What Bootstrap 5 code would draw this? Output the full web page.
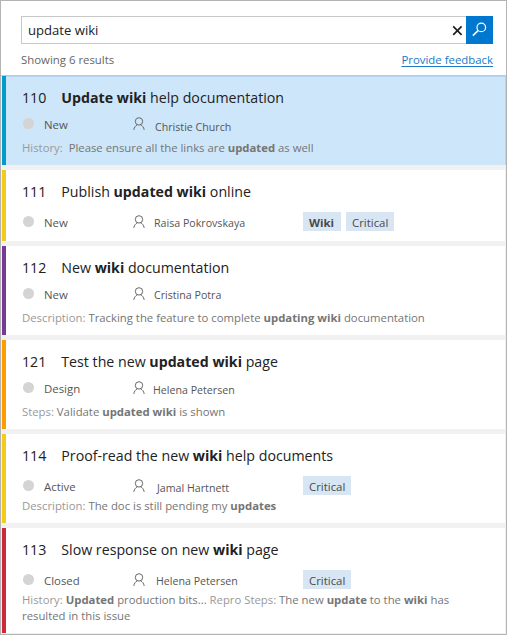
<!DOCTYPE html>
<html lang="en">
<head>
<meta charset="utf-8">
<meta name="viewport" content="width=device-width, initial-scale=1">
<title>Work item search</title>
<link href="https://cdn.jsdelivr.net/npm/bootstrap@5.3.0/dist/css/bootstrap.min.css" rel="stylesheet">
<style>
body{font-family:"Open Sans","Noto Sans",sans-serif;font-size:11.4px;color:#555;background:#fff;overflow:hidden}
.panel{height:635px;border:1px solid #b3b3b3}
.search-head{height:75px;padding:15px 13px 0 20px;border-bottom:1px solid #c4c8d0}
.search-box{height:28px;border:1px solid #c8c8c8;border-right:0;padding:0 3px 0 6px}
.query{font-size:13.1px;line-height:26px;color:#222}
.search-btn{width:27px;height:28px;background:#0078d0}
.result-info{margin-top:7px;height:17px;line-height:17px;color:#666}
.feedback{color:#1a7bc8;text-decoration:underline;text-underline-offset:2px}
.results{background:#f1f1f1;gap:5px;padding:0 1px}
.item{height:89px;padding:12px 20px 0 16px;border-left:4px solid;background:#fff}
.item-selected{background:#cde6f9;box-shadow:inset 0 1px #b5d3f2,1px 0 #b5d3f2}
.item-short{height:71px}
.item-long{height:105px}
.edge-blue{border-color:#009ccc}
.edge-yellow{border-color:#f2cb1d}
.edge-purple{border-color:#773b93}
.edge-orange{border-color:#ff9d00}
.edge-red{border-color:#cc293d}
.item-title{height:20px;line-height:20px;font-size:14.2px;color:#222}
.item-id{width:39.3px}
.item-meta{height:18px;margin-top:8px;line-height:18px}
.item-tagged .item-meta{height:19px;margin-top:10px;line-height:19px}
.state{width:110px}
.state-dot{width:11px;height:11px;margin:2px 10px 0 1px;border-radius:50%;background:#d4d4d4}
.item-tagged .state-dot{margin-top:4px}
.item-tagged .state-name{margin-top:1px}
.person{width:13px;height:14px;margin:1px 0 0 1px}
.item-tagged .person{margin-top:3px}
.owner{width:171px}
.owner-name{font-size:10.65px;padding-left:8px}
.item:nth-child(1) .owner-name{padding:2px 0 0 9px}
.item:nth-child(2) .owner-name{padding:2px 0 0 8px}
.item:nth-child(4) .owner-name{padding:1px 0 0 7px}
.item:nth-child(5) .owner-name{padding:3px 0 0 11px}
.item:nth-child(6) .owner-name{padding:2px 0 0 10px}
.tag{height:19px;line-height:21px;padding:0 6px;margin-right:5px;background:#d7e6f2;color:#4a4a4a}
.tag-match{width:38px}
.snippet{margin:6px 0 0;line-height:16px;font-size:11.33px;color:#757575}
.item-tagged .snippet{margin-top:3px}
.field{color:#999}
</style>
</head>
<body>
<svg class="d-none"><symbol id="person" viewBox="0 0 13 14"><g fill="none" stroke="#686868" stroke-width="1"><circle cx="6" cy="4.4" r="3.7"/><path d="M.8 12.9C1.2 10.3 2.7 8.6 4.4 7.8M7.6 7.8c1.7.8 3.2 2.5 3.6 5.1"/></g></symbol></svg>
<main class="panel d-flex flex-column">
  <header class="search-head flex-shrink-0">
    <div class="d-flex">
      <div class="search-box d-flex align-items-center flex-grow-1">
        <span class="query flex-grow-1">update wiki</span>
        <svg width="11" height="11" viewBox="0 0 11 11"><path d="M1.2 1.4l8.4 8.4M9.6 1.4L1.2 9.8" stroke="#1e1e1e" stroke-width="1.7"/></svg>
      </div>
      <div class="search-btn d-flex"><svg width="27" height="28" viewBox="0 0 27 28" fill="none" stroke="#fff"><circle cx="15.3" cy="11.4" r="4.3" stroke-width="1.2"/><path d="M12.1 14.6L6.8 19.6" stroke-width="1.5"/></svg></div>
    </div>
    <div class="result-info d-flex justify-content-between"><span>Showing 6 results</span><a class="feedback" href="#">Provide feedback</a></div>
  </header>
  <section class="results d-flex flex-column flex-grow-1">
    <article class="item item-selected edge-blue">
      <div class="item-title d-flex"><span class="item-id">110</span><span><b>Update wiki</b> help documentation</span></div>
      <div class="item-meta d-flex"><div class="state d-flex"><span class="state-dot"></span><span class="state-name">New</span></div><div class="owner d-flex"><svg class="person"><use href="#person"/></svg><span class="owner-name">Christie Church</span></div></div>
      <p class="snippet"><span class="field">History:</span>&nbsp; Please ensure all the links are <b>updated</b> as well</p>
    </article>
    <article class="item item-tagged item-short edge-yellow">
      <div class="item-title d-flex"><span class="item-id">111</span><span>Publish <b>updated wiki</b> online</span></div>
      <div class="item-meta d-flex"><div class="state d-flex"><span class="state-dot"></span><span class="state-name">New</span></div><div class="owner d-flex"><svg class="person"><use href="#person"/></svg><span class="owner-name">Raisa Pokrovskaya</span></div><span class="tag tag-match"><b>Wiki</b></span><span class="tag">Critical</span></div>
    </article>
    <article class="item edge-purple">
      <div class="item-title d-flex"><span class="item-id">112</span><span>New <b>wiki</b> documentation</span></div>
      <div class="item-meta d-flex"><div class="state d-flex"><span class="state-dot"></span><span class="state-name">New</span></div><div class="owner d-flex"><svg class="person"><use href="#person"/></svg><span class="owner-name">Cristina Potra</span></div></div>
      <p class="snippet"><span class="field">Description:</span> Tracking the feature to complete <b>updating wiki</b> documentation</p>
    </article>
    <article class="item edge-orange">
      <div class="item-title d-flex"><span class="item-id">121</span><span>Test the new <b>updated wiki</b> page</span></div>
      <div class="item-meta d-flex"><div class="state d-flex"><span class="state-dot"></span><span class="state-name">Design</span></div><div class="owner d-flex"><svg class="person"><use href="#person"/></svg><span class="owner-name">Helena Petersen</span></div></div>
      <p class="snippet"><span class="field">Steps:</span> Validate <b>updated wiki</b> is shown</p>
    </article>
    <article class="item item-tagged edge-yellow">
      <div class="item-title d-flex"><span class="item-id">114</span><span>Proof-read the new <b>wiki</b> help documents</span></div>
      <div class="item-meta d-flex"><div class="state d-flex"><span class="state-dot"></span><span class="state-name">Active</span></div><div class="owner d-flex"><svg class="person"><use href="#person"/></svg><span class="owner-name">Jamal Hartnett</span></div><span class="tag">Critical</span></div>
      <p class="snippet"><span class="field">Description:</span> The doc is still pending my <b>updates</b></p>
    </article>
    <article class="item item-tagged item-long edge-red">
      <div class="item-title d-flex"><span class="item-id">113</span><span>Slow response on new <b>wiki</b> page</span></div>
      <div class="item-meta d-flex"><div class="state d-flex"><span class="state-dot"></span><span class="state-name">Closed</span></div><div class="owner d-flex"><svg class="person"><use href="#person"/></svg><span class="owner-name">Helena Petersen</span></div><span class="tag">Critical</span></div>
      <p class="snippet"><span class="field">History:</span> <b>Updated</b> production bits... <span class="field">Repro Steps:</span> The new <b>update</b> to the <b>wiki</b> has<br>resulted in this issue</p>
    </article>
  </section>
</main>
</body>
</html>
